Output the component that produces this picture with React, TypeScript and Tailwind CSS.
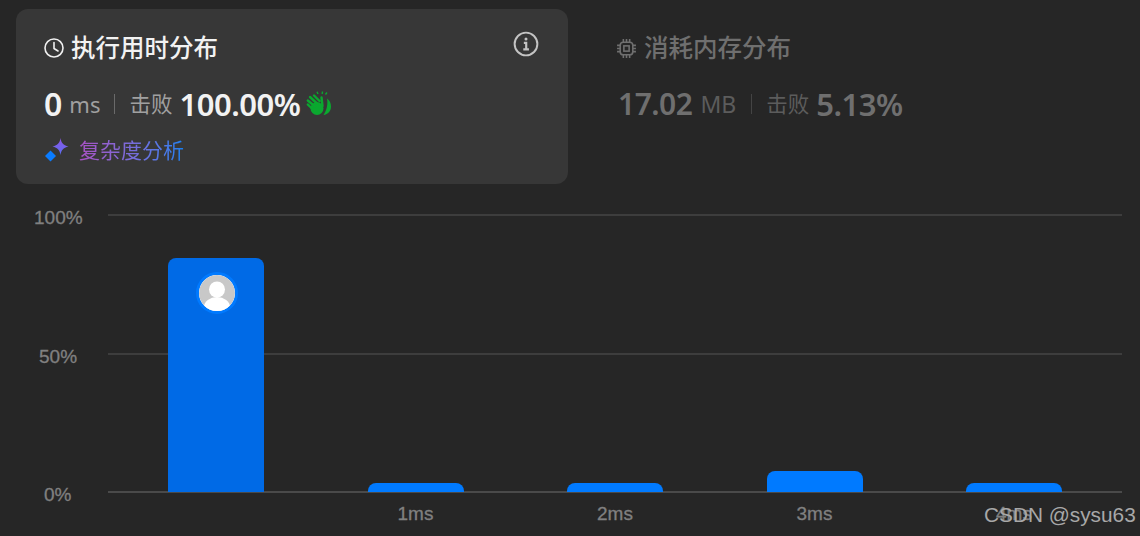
const cjk = "font-['Noto_Sans','Noto_Sans_CJK_SC',sans-serif]";

function Bar({ h, dark, avatar }: { h: string; dark?: boolean; avatar?: boolean }) {
  return (
    <div className="flex h-[278px] w-[96px] flex-col justify-end">
      <div className={`${h} ${dark ? "bg-[#006ae6]" : "bg-[#007aff]"} flex justify-center rounded-t-[8px]`}>
        {avatar && (
          <div className="mt-[14px] ml-[1px] h-[42px] w-[42px] overflow-hidden rounded-full border-[3px] border-[#007aff] bg-white">
            <svg viewBox="0 0 36 36" className="h-full w-full">
              <circle cx="18" cy="18" r="18" fill="#c8c8c8" />
              <circle cx="18" cy="14.5" r="8" fill="#fff" />
              <ellipse cx="18" cy="32" rx="13" ry="10" fill="#fff" />
            </svg>
          </div>
        )}
      </div>
    </div>
  );
}

export default function App() {
  return (
    <div className={`relative h-[536px] w-[1140px] overflow-hidden bg-[#262626] ${cjk}`}>
      <div className="flex pl-4 pt-[9px]">
        <div className="relative flex h-[175px] w-[552px] flex-col rounded-[12px] bg-[#373737] pl-[28px] pt-[21px]">
          <div className="flex h-[36px] items-center gap-[7px]">
            <svg viewBox="0 0 20 20" className="h-[20px] w-[20px]" fill="none" stroke="#f0f0f0" strokeWidth="1.6">
              <circle cx="10" cy="10" r="9" />
              <path d="M10 4.5V10.5L14 13" strokeLinecap="round" strokeLinejoin="round" />
            </svg>
            <span className="text-[24.5px] font-medium leading-[36px] text-[#f2f2f2]">执行用时分布</span>
          </div>
          <div className="mt-[20px] flex h-[36px] items-center">
            <span className="text-[32px] font-semibold leading-[36px] text-[#f2f2f2]">0</span>
            <span className="ml-[7px] text-[22px] leading-[36px] text-[#a0a0a0]">ms</span>
            <span className="ml-[14px] h-[20px] w-[1px] bg-[#6a6a6a]"></span>
            <span className="ml-[14px] text-[21.5px] leading-[36px] text-[#a0a0a0]">击败</span>
            <span className="ml-[7px] text-[31px] font-semibold leading-[36px] tracking-[-0.5px] text-[#f2f2f2]">100.00%</span>
            <svg viewBox="0 0 26 26" className="ml-[6px] h-[26px] w-[26px]" fill="none" stroke="#0aa82f" strokeLinecap="round">
              <circle cx="11" cy="17.500" r="6.500" fill="#0aa82f" stroke="none" />
              <path d="M1.800 13.500L7 18.500M1.800 9.500L9 15.500M4 6L11 12.500M8 4.500L13.500 10M15.500 6.500L16.500 15" strokeWidth="2.400" />
              <path d="M21 7.500C22 13 21 19 17.500 24C22 23.500 25 20 25 15.500C25 12 23.500 9 21 7.500Z" fill="#0aa82f" stroke="none" />
              <path d="M11 .800L12 3M16.500 .500L16.200 3M21 1.500L19.500 3.500" strokeWidth="1.400" strokeLinecap="butt" />
            </svg>
          </div>
          <div className="mt-[13px] flex h-[30px] items-center gap-[9px]">
            <svg viewBox="0 0 26 26" className="h-[26px] w-[26px]">
              <defs>
                <linearGradient id="star" x1="0" y1="0" x2="0" y2="1">
                  <stop offset="0" stopColor="#8f55e6" />
                  <stop offset="1" stopColor="#5a6ff0" />
                </linearGradient>
              </defs>
              <path d="M16.500 1c.8 5 2.500 7 8 8.500-5.500 1.500-7.200 3.500-8 8.500-.8-5-2.500-7-8-8.500 5.500-1.500 7.200-3.500 8-8.500z" fill="url(#star)" />
              <path d="M6.500 13.500l5.500 5.500-5.500 5.500L1 19z" fill="#0a7cff" />
            </svg>
            <span className="bg-gradient-to-r from-[#a851c4] to-[#0f7ff0] bg-clip-text text-[21px] leading-[30px] text-transparent">复杂度分析</span>
          </div>
          <svg viewBox="0 0 24 24" className="absolute right-[29px] top-[22px] h-[26px] w-[26px]" fill="none" stroke="#c4c4c4" strokeWidth="1.800">
            <circle cx="12" cy="12" r="10.500" />
            <path d="M10 11h2.200v6M9.500 17h5.200" strokeWidth="2" />
            <circle cx="12" cy="7.300" r="1.400" fill="#c4c4c4" stroke="none" />
          </svg>
        </div>

        <div className="ml-[48px] flex flex-col pt-[21px]">
          <div className="flex h-[36px] items-center gap-[7px]">
            <svg viewBox="0 0 20 20" className="h-[21px] w-[21px]" fill="none" stroke="#6f6f6f" strokeWidth="1.500">
              <rect x="4" y="4" width="12" height="12" rx="3" />
              <rect x="7.500" y="7.500" width="5" height="5" />
              <path d="M7 1v3M10 1v3M13 1v3M7 16v3M10 16v3M13 16v3M1 7h3M1 10h3M1 13h3M16 7h3M16 10h3M16 13h3" />
            </svg>
            <span className="text-[24.5px] font-medium leading-[36px] text-[#6f6f6f]">消耗内存分布</span>
          </div>
          <div className="mt-[20px] flex h-[36px] items-center pl-[2px]">
            <span className="text-[30px] font-semibold leading-[36px] tracking-[-0.5px] text-[#6f6f6f]">17.02</span>
            <span className="ml-[8px] text-[23px] leading-[36px] text-[#5c5c5c]">MB</span>
            <span className="ml-[15px] h-[20px] w-[1px] bg-[#444444]"></span>
            <span className="ml-[14px] text-[21.5px] leading-[36px] text-[#5c5c5c]">击败</span>
            <span className="ml-[7px] text-[31px] font-semibold leading-[36px] tracking-[-0.5px] text-[#6f6f6f]">5.13%</span>
          </div>
        </div>
      </div>

      <div className="mt-[30px] flex font-['Liberation_Sans',sans-serif] text-[19px] text-[#808080] [-webkit-text-stroke:0.3px_#808080]">
        <div className="flex w-[108px] flex-col pl-[34px]">
          <span className="h-[139px] leading-[8px]">100%</span>
          <span className="h-[138px] pl-[5px] leading-[8px]">50%</span>
          <span className="pl-[10px] leading-[8px]">0%</span>
        </div>
        <div className="w-[1014px]">
          <div className="grid">
            <div className="col-start-1 row-start-1 flex h-[279px] flex-col justify-between">
              <div className="h-[2px] bg-[#3d3d3d]"></div>
              <div className="h-[2px] bg-[#3d3d3d]"></div>
              <div className="h-[2px] bg-[#4a4a4a]"></div>
            </div>
            <div className="col-start-1 row-start-1 flex h-[278px] gap-[103.5px] pl-[60px]">
              <Bar h="h-[234px]" dark avatar />
              <Bar h="h-[9px]" />
              <Bar h="h-[9px]" />
              <Bar h="h-[21px]" />
              <Bar h="h-[9px]" />
            </div>
          </div>
          <div className="mt-[11px] flex gap-[103.5px] pl-[60px] text-center leading-[20px]">
            <span className="w-[96px]"></span>
            <span className="w-[96px]">1ms</span>
            <span className="w-[96px]">2ms</span>
            <span className="w-[96px]">3ms</span>
            <span className="w-[96px]">4ms</span>
          </div>
        </div>
      </div>

      <span className="absolute left-[984px] top-[502px] font-['Liberation_Sans',sans-serif] text-[20.8px] leading-[26px] whitespace-nowrap text-[#a8a8a8]">CSDN @sysu63</span>
    </div>
  );
}
